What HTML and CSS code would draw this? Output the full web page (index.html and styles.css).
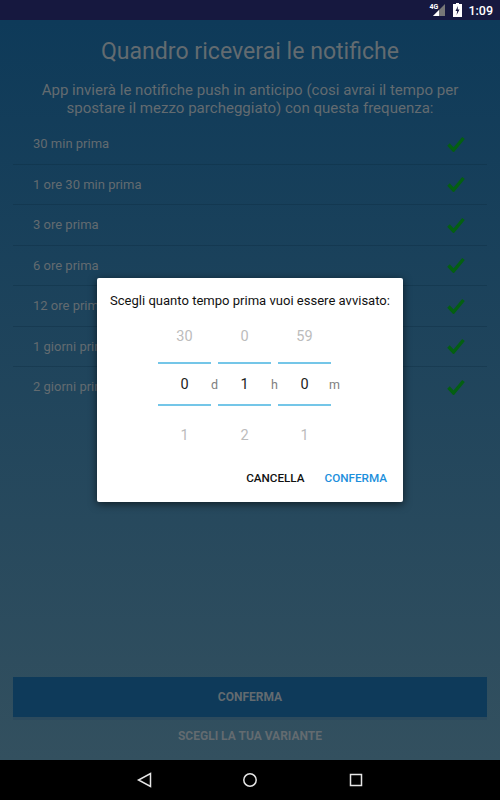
FILE: index.html
```html
<!DOCTYPE html>
<html lang="en">
<head>
    <meta charset="UTF-8">
    <title>Quandro riceverai le notifiche</title>
    <link rel="stylesheet" href="styles.css">
</head>
<body>
    <div class="phone">
        <div class="status">
            <span class="net">4G</span>
            <svg class="signal" width="14" height="12" viewBox="0 0 14 12"><path d="M13 0V12H1Z" fill="#777"/><path d="M7 6V12H1Z" fill="#fff"/></svg>
            <svg class="battery" width="9" height="14" viewBox="0 0 9 14"><path d="M3 0H6V1H9V14H0V1H3Z" fill="#fff"/><path d="M5 3L2.5 8H4.2L3.6 12L6.5 6.5H4.7Z" fill="#16183f"/></svg>
            <span class="clock">1:09</span>
        </div>

        <div class="main">
            <h1>Quandro riceverai le notifiche</h1>
            <p class="intro">App invierà le notifiche push in anticipo (cosi avrai il tempo per spostare il mezzo parcheggiato) con questa frequenza:</p>
            <ul class="freq">
                <li>30 min prima <svg class="tick" viewBox="0 0 18 16"><path d="M1.5 8.5L6.5 14L16.5 2" /></svg></li>
                <li>1 ore 30 min prima <svg class="tick" viewBox="0 0 18 16"><path d="M1.5 8.5L6.5 14L16.5 2" /></svg></li>
                <li>3 ore prima <svg class="tick" viewBox="0 0 18 16"><path d="M1.5 8.5L6.5 14L16.5 2" /></svg></li>
                <li>6 ore prima <svg class="tick" viewBox="0 0 18 16"><path d="M1.5 8.5L6.5 14L16.5 2" /></svg></li>
                <li>12 ore prima <svg class="tick" viewBox="0 0 18 16"><path d="M1.5 8.5L6.5 14L16.5 2" /></svg></li>
                <li>1 giorni prima <svg class="tick" viewBox="0 0 18 16"><path d="M1.5 8.5L6.5 14L16.5 2" /></svg></li>
                <li>2 giorni prima <svg class="tick" viewBox="0 0 18 16"><path d="M1.5 8.5L6.5 14L16.5 2" /></svg></li>
            </ul>
            <div class="actions">
                <div class="btn-main">CONFERMA</div>
                <div class="btn-link">SCEGLI LA TUA VARIANTE</div>
            </div>
        </div>

        <div class="navbar">
            <svg width="16" height="16" viewBox="0 0 16 16"><path d="M14.5 1.5V14.5L2.5 8Z" /></svg>
            <svg width="16" height="16" viewBox="0 0 16 16"><circle cx="8" cy="8" r="6.2" /></svg>
            <svg width="16" height="16" viewBox="0 0 16 16"><rect x="2.5" y="2.5" width="11" height="11" /></svg>
        </div>

        <div class="dialog">
            <div class="dialog-title">Scegli quanto tempo prima vuoi essere avvisato:</div>
            <div class="picker">
                <div class="col">
                    <div class="wheel"><span>30</span><b>0</b><span>1</span></div>
                    <i>d</i>
                </div>
                <div class="col">
                    <div class="wheel"><span>0</span><b>1</b><span>2</span></div>
                    <i>h</i>
                </div>
                <div class="col">
                    <div class="wheel"><span>59</span><b>0</b><span>1</span></div>
                    <i>m</i>
                </div>
            </div>
            <div class="dialog-actions">
                <span class="cancel">CANCELLA</span>
                <span class="ok">CONFERMA</span>
            </div>
        </div>
    </div>
</body>
</html>
```
FILE: styles.css
```css
body {
    margin: 0;
    font-family: Roboto, sans-serif;
}
.phone {
    position: relative;
    width: 500px;
    height: 800px;
    display: flex;
    flex-direction: column;
    overflow: hidden;
}
.status {
    height: 20px;
    background-color: #16183f;
    display: flex;
    align-items: center;
    justify-content: flex-end;
    padding-right: 7px;
    color: #fff;
    font-size: 12.5px;
    font-weight: 500;
}
.net {
    font-size: 7px;
    font-weight: 700;
    align-self: flex-start;
    margin: 3px -6px 0 0;
}
.signal {
    margin-right: 7px;
}
.battery {
    margin-right: 6px;
}
.main {
    flex: 1;
    display: flex;
    flex-direction: column;
    padding: 0 13px;
    background: linear-gradient(#0e3a59, #33505f);
    color: #636b70;
}
h1 {
    margin: 18px 0 0;
    font-size: 23.1px;
    font-weight: 400;
    line-height: 28px;
    text-align: center;
}
.intro {
    margin: 16px 0 0;
    font-size: 15.05px;
    line-height: 17.5px;
    text-align: center;
}
.freq {
    list-style: none;
    margin: 7px 0 0;
    padding: 0;
}
.freq li {
    height: 39.5px;
    padding: 0 22px 0 20px;
    display: flex;
    align-items: center;
    justify-content: space-between;
    font-size: 13px;
    border-bottom: 1px solid rgba(10, 40, 60, 0.3);
}
.freq li:last-child {
    border-bottom: 0;
}
.tick {
    width: 18px;
    height: 16px;
    fill: none;
    stroke: #045f12;
    stroke-width: 3.4;
}
.actions {
    margin-top: auto;
}
.btn-main {
    height: 40px;
    line-height: 40px;
    background-color: #0e3a5a;
    box-shadow: 0 3px 0 #2c4a5d;
    text-align: center;
    font-size: 12px;
    font-weight: 700;
}
.btn-link {
    height: 43px;
    line-height: 38px;
    text-align: center;
    font-size: 12px;
    font-weight: 700;
}
.navbar {
    height: 40px;
    background-color: #000;
    display: flex;
    align-items: center;
    justify-content: center;
    gap: 90px;
}
.navbar svg {
    fill: none;
    stroke: #e6e6e6;
    stroke-width: 1.5;
}
.dialog {
    position: absolute;
    left: 97px;
    top: 278px;
    width: 306px;
    height: 224px;
    background-color: #fff;
    border-radius: 2px;
    box-shadow: 0 2px 8px rgba(0, 0, 0, 0.6);
    display: flex;
    flex-direction: column;
}
.dialog-title {
    margin-top: 15px;
    padding-left: 13px;
    font-size: 13.05px;
    line-height: 16px;
    color: #111;
    white-space: nowrap;
}
.picker {
    display: flex;
    margin: 1px 0 0 61px;
}
.col {
    display: flex;
    align-items: center;
}
.wheel {
    width: 53px;
    display: flex;
    flex-direction: column;
    text-align: center;
    font-size: 14.5px;
    color: #bcbcbc;
}
.wheel span {
    height: 50px;
    line-height: 53px;
}
.wheel span:last-child {
    line-height: 55px;
}
.wheel b {
    height: 40px;
    line-height: 42px;
    margin: 2px 0;
    font-weight: 400;
    color: #222;
    border-top: 2px solid #74c6e8;
    border-bottom: 2px solid #74c6e8;
}
.col i {
    width: 7px;
    display: flex;
    justify-content: center;
    font-style: normal;
    font-size: 12.5px;
    color: #808080;
}
.dialog-actions {
    margin-top: auto;
    height: 40px;
    padding: 0 16px 4px 0;
    display: flex;
    justify-content: flex-end;
    gap: 20px;
    font-size: 11.7px;
    font-weight: 500;
    line-height: 40px;
}
.cancel {
    color: #111;
}
.ok {
    color: #1c8fdc;
}
```
